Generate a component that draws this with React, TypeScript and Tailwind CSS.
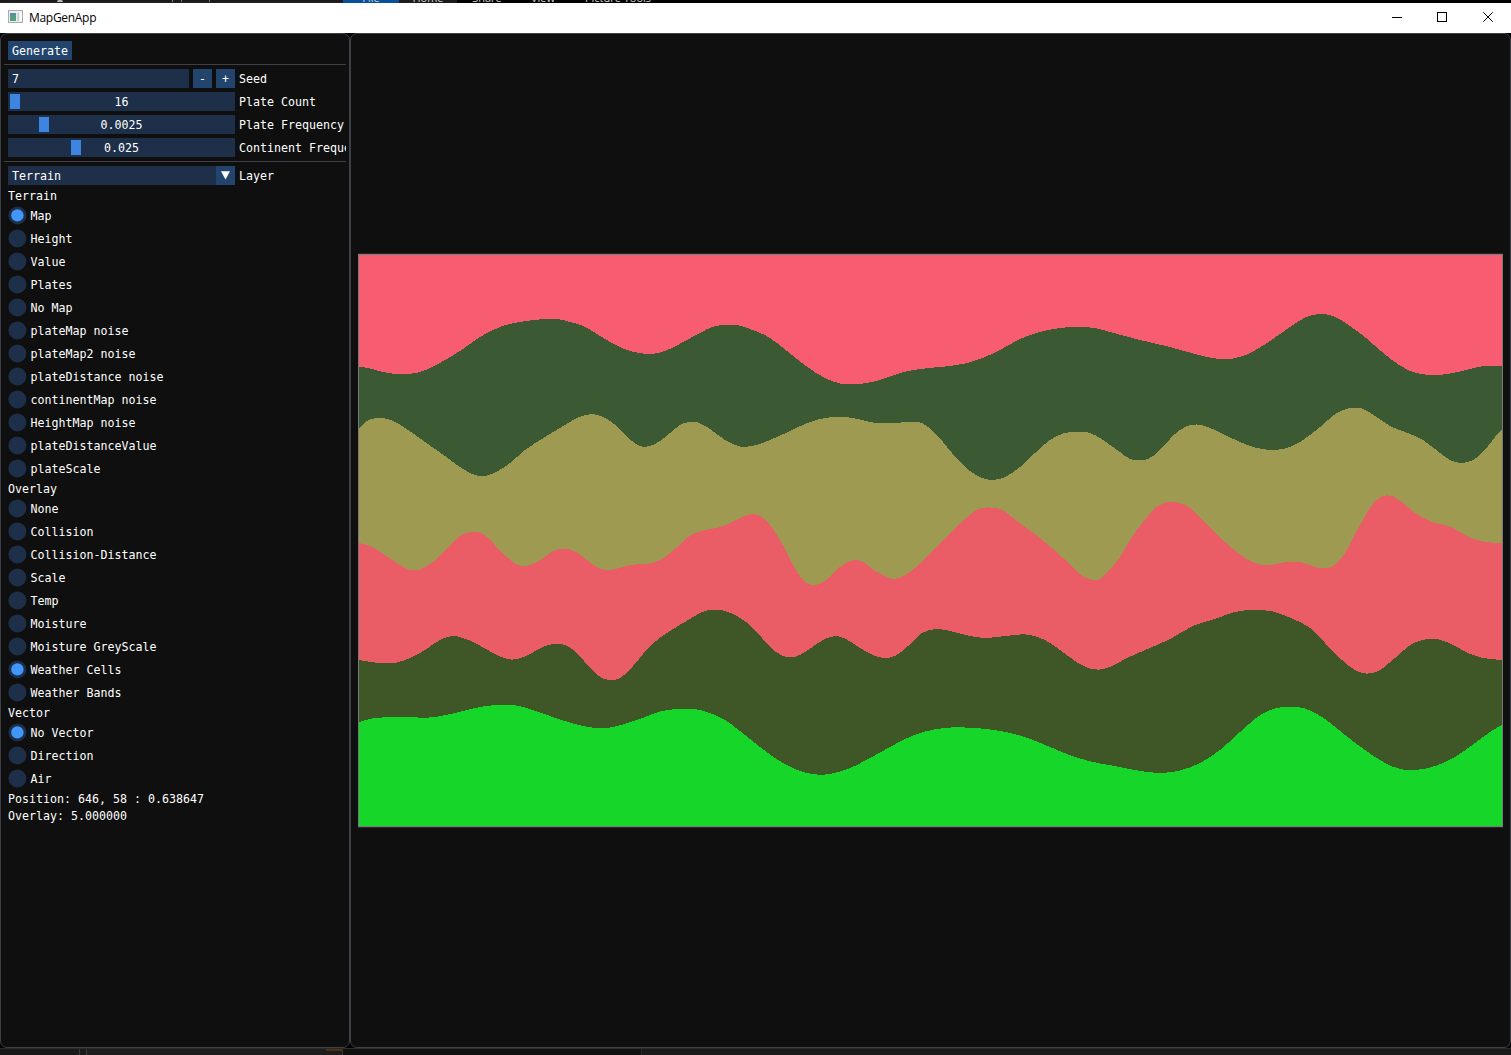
import React from "react";

type Point = [number, number];

/* Upper edge of each weather cell, listed top to bottom. */
const RIDGES: { color: string; points: Point[] }[] = [
  {
    color: "#3b5932",
    points: [[359,366.5],[370,368.5],[383,372],[397,374],[407,374],[420,372],[430,368],[445,360],[463,349],[480,337],[500,327],[520,322],[534,320],[546,319],[558,319],[570,322],[583,326],[597,334],[612,343],[627,350],[640,353],[650,354],[660,352.5],[672,348],[685,341],[700,333],[712,327],[725,325],[737,325],[750,329],[770,338],[787,351],[806,366],[825,378],[840,383.5],[863,383.5],[880,380],[900,373],[920,369],[945,366.5],[965,363.5],[980,359],[1000,350],[1020,339],[1040,332],[1060,328],[1078,327],[1095,328],[1110,332],[1140,340],[1170,347],[1195,354],[1212,358],[1233,358.5],[1248,354],[1270,341],[1290,327],[1305,317.5],[1319,314],[1333,316],[1350,326],[1366,338],[1390,358.5],[1410,371],[1425,374.5],[1443,374.5],[1460,371.5],[1478,367],[1486,366],[1503,366]],
  },
  {
    color: "#9f9a51",
    points: [[359,429],[365,422],[372,419],[381,418],[391,420],[405,428],[425,442],[445,456],[463,469],[475,475],[487,475.5],[498,471],[510,463],[525,450],[545,437],[560,428],[575,419],[586,415],[598,415],[610,421],[622,431],[632,441],[640,446],[650,446],[660,441],[670,433],[680,425],[689,422],[698,422.5],[710,429],[725,440],[740,446.5],[752,446],[770,440],[790,431],[810,422],[825,418],[845,417],[860,419.5],[875,423],[895,423],[910,422],[922,423],[935,433],[952,453],[970,471],[982,478],[992,480],[1005,477],[1020,467],[1035,453],[1050,440],[1063,433.5],[1077,432],[1090,433],[1100,438],[1110,445],[1120,452],[1130,459],[1138,460],[1148,459],[1160,450],[1175,434],[1185,427],[1197,424.5],[1208,427],[1223,434],[1240,442],[1257,448],[1272,450],[1285,448.5],[1300,442],[1320,427],[1337,413],[1350,408],[1362,408.5],[1375,416],[1390,426],[1405,432],[1423,440],[1440,453],[1450,460],[1462,463],[1473,460],[1485,450],[1495,437],[1503,429]],
  },
  {
    color: "#ea5d66",
    points: [[359,543],[372,547],[385,555],[400,565],[410,570],[420,569.5],[433,562],[447,549],[460,536],[472,532],[483,534],[495,545],[508,558],[518,565],[530,565],[542,559],[553,551],[562,549],[570,549.5],[582,556],[595,566],[605,570],[613,569.5],[630,565],[650,563.5],[662,559],[675,549],[688,537],[705,530],[720,527],[730,523],[740,518],[752,514],[760,516],[770,525],[785,549],[797,572],[807,583],[815,585],[825,581],[840,567],[850,561],[862,561.5],[875,571],[885,576],[893,579],[905,575],[923,561],[945,538],[965,519],[980,508.5],[990,507.5],[1000,509],[1017,521],[1040,538],[1063,558],[1080,574],[1092,580],[1100,579],[1110,569.5],[1120,557],[1130,540],[1143,522],[1155,508],[1168,502],[1175,502],[1187,506],[1203,520],[1225,542],[1245,558],[1258,564],[1270,565],[1285,562],[1300,562],[1315,567],[1325,568],[1335,565],[1345,553],[1360,525],[1373,504],[1382,496.5],[1393,496.5],[1403,503],[1415,513],[1430,521],[1453,528],[1467,536],[1480,541],[1503,543]],
  },
  {
    color: "#3f5727",
    points: [[359,660],[375,662.5],[397,662.5],[410,658],[425,650],[440,640],[452,636],[460,637],[475,643],[495,654],[507,659],[518,659],[530,654],[545,646],[555,644],[565,645],[577,653],[590,668],[602,678],[610,680],[618,679],[633,666],[650,646],[670,631],[690,619],[702,612],[715,609.5],[725,611],[738,616.5],[755,630],[770,647],[783,656],[795,657],[808,650],[823,640],[835,636],[845,638.5],[860,648],[875,656],[885,658],[895,656],[908,646],[922,633],[937,629],[950,631],[970,636],[985,638],[1005,636],[1030,635],[1045,640],[1060,650],[1075,661],[1088,668],[1100,669.5],[1112,666],[1125,659],[1150,648],[1170,639],[1193,626],[1215,619],[1235,612],[1257,610],[1275,612],[1293,619],[1310,628],[1325,643],[1342,660],[1355,670],[1366,673.5],[1378,671],[1395,658],[1412,644],[1425,639.5],[1437,639],[1453,645],[1468,653],[1483,658],[1503,660]],
  },
  {
    color: "#17d62a",
    points: [[359,722],[372,718.5],[395,717],[435,717],[455,713],[475,708],[495,705],[513,705],[530,709],[550,716],[575,724],[592,727.5],[610,727.5],[625,724],[645,717],[662,711],[680,709],[697,709.5],[710,713],[725,720],[740,731],[755,743],[775,758],[795,769],[812,774],[830,774],[850,768],[870,758],[890,747],[905,739],[925,731.5],[945,728],[975,728],[1000,731],[1025,737],[1050,747],[1075,757],[1100,763.5],[1115,766],[1135,770],[1160,773],[1180,770.5],[1200,763],[1220,750],[1240,732],[1262,714],[1275,708.5],[1290,706.5],[1305,708.5],[1325,719],[1345,735],[1365,750],[1385,763],[1400,769],[1415,770],[1432,767],[1455,757],[1475,743],[1490,732],[1503,724]],
  },
];

/* Slope at point i: neighbouring slopes weighted by the opposite interval. */
function slope(p: Point[], i: number): number {
  if (i === 0 || i === p.length - 1) {
    const j = Math.max(i, 1);
    return (p[j][1] - p[j - 1][1]) / (p[j][0] - p[j - 1][0]);
  }
  const h0 = p[i][0] - p[i - 1][0];
  const h1 = p[i + 1][0] - p[i][0];
  const d0 = (p[i][1] - p[i - 1][1]) / h0;
  const d1 = (p[i + 1][1] - p[i][1]) / h1;
  return (d0 * h1 + d1 * h0) / (h0 + h1);
}

/* Cubic spline through the points, closed along the map's bottom edge. */
function areaPath(p: Point[]): string {
  let d = `M${p[0][0]},${p[0][1]}`;
  for (let i = 0; i < p.length - 1; i++) {
    const b = p[i];
    const c = p[i + 1];
    const third = (c[0] - b[0]) / 3;
    d += `C${b[0] + third},${b[1] + slope(p, i) * third} ${c[0] - third},${c[1] - slope(p, i + 1) * third} ${c[0]},${c[1]}`;
  }
  return d + "V830H359Z";
}

function MapView() {
  return (
    <div className="h-[575px] w-[1145px] border-y border-[#2c2829]">
      <div className="h-full w-full border border-[#77797b] bg-[#f85c70]">
        <svg className="block h-[571px] w-[1143px]" viewBox="359 255 1143 571" shapeRendering="crispEdges">
          {RIDGES.map((r) => (
            <path key={r.color} d={areaPath(r.points)} fill={r.color} />
          ))}
        </svg>
      </div>
    </div>
  );
}

function Separator() {
  return <div className="-ml-1 h-px shrink-0 bg-[#3f3f47]" />;
}

function Row({ children, label }: { children: React.ReactNode; label: string }) {
  return (
    <div className="flex h-[19px] shrink-0 gap-1">
      {children}
      <span className="leading-[21px]">{label}</span>
    </div>
  );
}

function Slider({ value, offset, label }: { value: string; offset: number; label: string }) {
  return (
    <Row label={label}>
      <div className="relative w-[227px] shrink-0 bg-[#1d2f49] text-center leading-[21px]">
        <div className="absolute top-0.5 h-[15px] w-2.5 bg-[#3d85e0]" style={{ left: offset }} />
        {value}
      </div>
    </Row>
  );
}

function Radio({ label, on }: { label: string; on?: boolean }) {
  return (
    <div className="flex h-[19px] shrink-0">
      <svg className="shrink-0" width="19" height="19" viewBox="0 0 19 19">
        <circle cx="9.4" cy="9.4" r="9" fill="#1d2f49" />
        {on && <circle cx="9.4" cy="9.4" r="6.2" fill="#4296fa" />}
      </svg>
      <span className="ml-[3.5px] leading-[21px]">{label}</span>
    </div>
  );
}

function Text({ children }: { children: React.ReactNode }) {
  return <div className="h-[13px] shrink-0 leading-[15px]">{children}</div>;
}

const TERRAIN = ["Map", "Height", "Value", "Plates", "No Map", "plateMap noise", "plateMap2 noise", "plateDistance noise", "continentMap noise", "HeightMap noise", "plateDistanceValue", "plateScale"];
const OVERLAY = ["None", "Collision", "Collision-Distance", "Scale", "Temp", "Moisture", "Moisture GreyScale", "Weather Cells", "Weather Bands"];
const VECTOR = ["No Vector", "Direction", "Air"];

function Sidebar() {
  return (
    <div className="w-[350px] shrink-0 overflow-hidden rounded-[7px] border border-[#3f3f47] bg-[#0f0f0f] pl-[7px] pr-[3px] pt-[7px]">
      <div className="-ml-1 flex h-full flex-col gap-1 overflow-hidden whitespace-pre pl-1 font-['DejaVu_Sans_Mono',monospace] text-[11.63px] text-white">
        <button className="h-[19px] w-16 shrink-0 bg-[#23456d] text-center leading-[21px]">Generate</button>
        <Separator />
        <Row label="Seed">
          <div className="w-[181px] shrink-0 bg-[#1d2f49] pl-1 leading-[21px]">7</div>
          <button className="w-[19px] shrink-0 bg-[#23456d] leading-[21px]">-</button>
          <button className="w-[19px] shrink-0 bg-[#23456d] leading-[21px]">+</button>
        </Row>
        <Slider value="16" offset={2} label="Plate Count" />
        <Slider value="0.0025" offset={31} label="Plate Frequency" />
        <Slider value="0.025" offset={63} label="Continent Frequency" />
        <Separator />
        <Row label="Layer">
          <div className="flex w-[227px] shrink-0 justify-between bg-[#1d2f49] pl-1 leading-[21px]">
            Terrain
            <span className="flex w-[19px] items-center justify-center bg-[#23456d]">
              <svg width="9" height="9" viewBox="0 0 9 9">
                <path d="M0 0.3h9L4.5 8.6z" fill="#fff" />
              </svg>
            </span>
          </div>
        </Row>
        <Text>Terrain</Text>
        {TERRAIN.map((t) => (
          <Radio key={t} label={t} on={t === "Map"} />
        ))}
        <Text>Overlay</Text>
        {OVERLAY.map((t) => (
          <Radio key={t} label={t} on={t === "Weather Cells"} />
        ))}
        <Text>Vector</Text>
        {VECTOR.map((t) => (
          <Radio key={t} label={t} on={t === "No Vector"} />
        ))}
        <Text>Position: 646, 58 : 0.638647</Text>
        <Text>Overlay: 5.000000</Text>
      </div>
    </div>
  );
}

function BackgroundTop() {
  return (
    <div className="flex h-[3px] shrink-0 overflow-hidden bg-black font-['Open_Sans',sans-serif] text-[11px] text-[#d0d0d0]">
      <div className="flex w-[343px] shrink-0 border-b border-[#222] bg-[#1b1b1c]">
        <div className="ml-[57px] h-0.5 w-1.5 rounded-t-full bg-[#bbb]" />
        <div className="ml-[109px] w-px bg-[#888]" />
        <div className="ml-2 w-px bg-[#777]" />
        <div className="ml-[27px] w-px bg-[#777]" />
      </div>
      <div className="flex w-14 justify-center bg-[#07509a]"><span className="-mt-[8px] leading-3">File</span></div>
      <div className="flex w-[58px] justify-center bg-[#1c1c1c]"><span className="-mt-[8px] leading-3">Home</span></div>
      <div className="flex w-[60px] justify-center"><span className="-mt-[8px] leading-3">Share</span></div>
      <div className="flex w-[52px] justify-center"><span className="-mt-[8px] leading-3">View</span></div>
      <div className="flex w-[98px] justify-center"><span className="-mt-[8px] leading-3">Picture Tools</span></div>
    </div>
  );
}

function TitleBar() {
  return (
    <div className="flex h-[30px] shrink-0 items-center bg-white pl-2 text-black">
      <svg className="-mt-[3px]" width="15" height="13" viewBox="0 0 15 13">
        <defs>
          <linearGradient id="pane" x1="0" y1="0" x2="0.6" y2="1">
            <stop offset="0" stopColor="#5d86b0" />
            <stop offset="1" stopColor="#4fa574" />
          </linearGradient>
        </defs>
        <path d="M0 0h15v13H0z" fill="#a9adb0" />
        <path d="M1 1h13v11H1z" fill="#eceeee" />
        <path d="M2 3h6v8H2z" fill="url(#pane)" />
        <path d="M9 3h2v8H9z" fill="#cdd1d2" />
        <path d="M12 3h1.5v8H12z" fill="#fff" />
      </svg>
      <span className="ml-1.5 font-['Open_Sans',sans-serif] text-[12px] leading-[30px] tracking-[-0.3px]">MapGenApp</span>
      <svg className="-mt-0.5 ml-auto mr-[17px]" width="102" height="12" viewBox="0 0 102 12" fill="none" stroke="#000">
        <path d="M0 6.5h10M45.5 1.5h9v9h-9z" shapeRendering="crispEdges" />
        <path d="M91.3 1.3l9.4 9.4M100.7 1.3l-9.4 9.4" />
      </svg>
    </div>
  );
}

function BackgroundBottom() {
  return (
    <div className="flex h-[7px] shrink-0 border-t border-[#2a2a2a] bg-[#1a1a1a]">
      <div className="w-20 border-r border-[#3a3a3c] bg-[#191919]" />
      <div className="w-[7px] border-r border-[#3a3a3c]" />
      <div className="flex w-[256px] justify-end border-r border-[#3a3a3c] bg-[#1e1e1e]">
        <div className="h-0.5 w-4 bg-[#532e12]" />
      </div>
      <div className="w-[299px] border-r border-[#2c2c2c] bg-[#111]" />
    </div>
  );
}

export default function App() {
  return (
    <div className="flex h-[1055px] w-[1511px] flex-col overflow-hidden bg-black">
      <BackgroundTop />
      <TitleBar />
      <div className="flex min-h-0 flex-1">
        <Sidebar />
        <div className="flex-1 rounded-[7px] border border-[#3f3f47] bg-[#0f0f0f] pl-[7px] pt-[219px]">
          <MapView />
        </div>
      </div>
      <BackgroundBottom />
    </div>
  );
}
